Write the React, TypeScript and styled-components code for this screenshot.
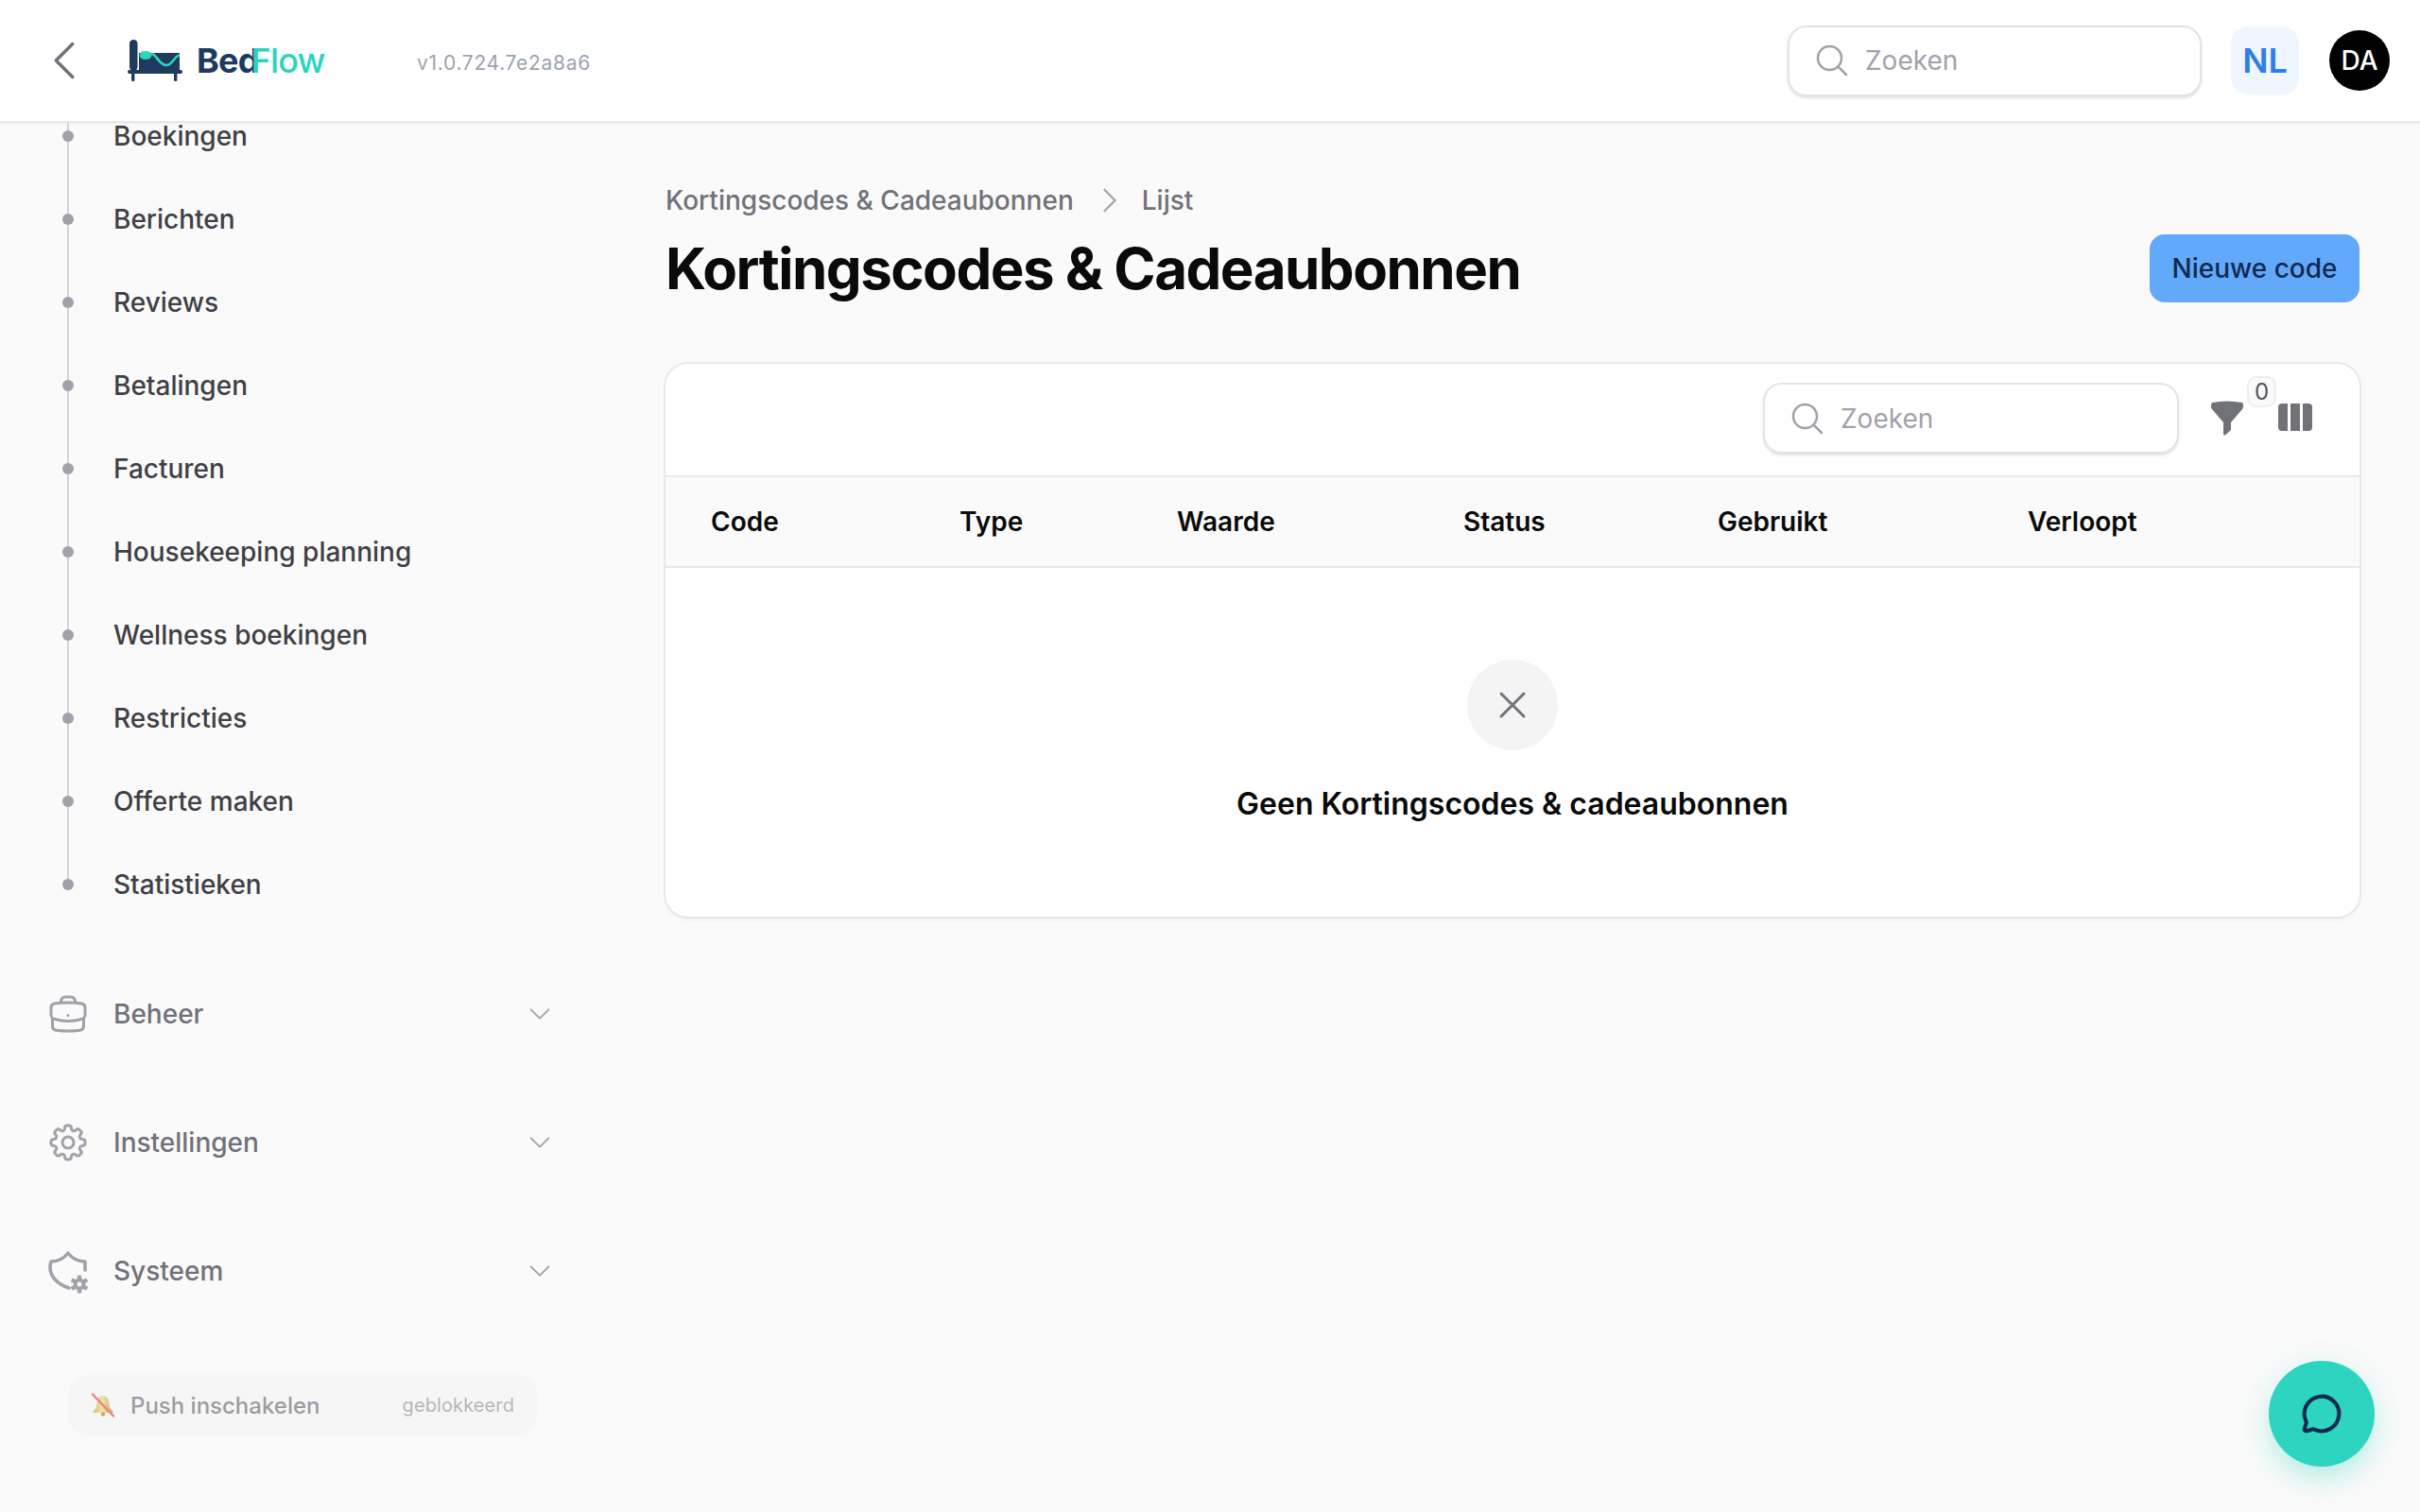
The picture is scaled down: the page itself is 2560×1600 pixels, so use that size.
import React from "react";
import styled, { createGlobalStyle } from "styled-components";
import {
  HiOutlineBriefcase,
  HiOutlineCog8Tooth,
  HiOutlineChevronDown,
  HiOutlineChevronLeft,
  HiOutlineChevronRight,
  HiOutlineMagnifyingGlass,
  HiOutlineXMark,
} from "react-icons/hi2";
import { MessageCircle } from "lucide-react";

const Global = createGlobalStyle`
  html, body { margin: 0; padding: 0; background: #fafafa; }
  * { box-sizing: border-box; }
  body { font-family: Inter, "Noto Sans", sans-serif; }
  #root { width: 2560px; height: 1600px; overflow: hidden; }
  svg { flex: none; }
`;

const Page = styled.div`
  width: 2560px;
  height: 1600px;
  display: flex;
  flex-direction: column;
  position: relative;
  background: #fafafa;
`;

const Header = styled.header`
  height: 130px;
  flex: none;
  display: flex;
  align-items: center;
  background: #fff;
  border-bottom: 2px solid #e7e7e8;
  box-shadow: 0 1px 3px rgba(0, 0, 0, 0.05);
  padding: 0 32px 0 50px;
  position: relative;
  z-index: 2;
`;

const BackButton = styled.div`
  width: 36px;
  height: 40px;
  display: flex;
  align-items: center;
  justify-content: center;
  color: #71717a;
  font-size: 56px;
`;

const Logo = styled.div`
  display: flex;
  align-items: center;
  margin-left: 49px;
  width: 306px;
`;

const WordMark = styled.div`
  display: flex;
  margin-left: 15px;
  font-size: 36px;
  line-height: 44px;
  letter-spacing: -0.8px;
`;

const Bed = styled.span`
  color: #1e3a5f;
  font-weight: 700;
`;

const Flow = styled.span`
  color: #2dd4bf;
  font-weight: 500;
  margin-left: -8px;
`;

const Version = styled.div`
  font-size: 21px;
  color: #9ca3af;
  letter-spacing: 0.7px;
  margin-top: 4px;
`;

const Spacer = styled.div`
  flex: 1;
`;

const SearchBox = styled.label`
  display: flex;
  align-items: center;
  gap: 13px;
  width: ${(p: { $w: number }) => p.$w}px;
  height: 75px;
  padding: 0 25px;
  background: #fff;
  border: 2px solid #e4e4e7;
  border-radius: 20px;
  box-shadow: 0 2px 3px rgba(0, 0, 0, 0.12);
  color: #a1a1aa;
  font-size: 40px;
  flex: none;
`;

const SearchInput = styled.input`
  border: 0;
  outline: 0;
  flex: 1;
  min-width: 0;
  background: transparent;
  font: 400 28px Inter, sans-serif;
  color: #18181b;
  &::placeholder {
    color: #a1a1aa;
    opacity: 1;
  }
`;

const LangBadge = styled.div`
  width: 72px;
  height: 72px;
  margin-left: 31px;
  border-radius: 18px;
  background: #eff6ff;
  color: #2f7fe6;
  font-size: 36px;
  font-weight: 600;
  display: flex;
  align-items: center;
  justify-content: center;
`;

const Avatar = styled.div`
  width: 64px;
  height: 64px;
  margin-left: 32px;
  border-radius: 50%;
  background: #000;
  color: #fff;
  font-size: 28px;
  font-weight: 500;
  display: flex;
  align-items: center;
  justify-content: center;
`;

const Body = styled.div`
  flex: 1;
  display: flex;
  min-height: 0;
`;

const Sidebar = styled.aside`
  width: 704px;
  flex: none;
  overflow: hidden;
`;

const NavList = styled.div`
  margin-top: -30px;
  display: flex;
  flex-direction: column;
`;

const NavItem = styled.div`
  position: relative;
  height: 88px;
  padding-left: 120px;
  display: flex;
  align-items: center;
  font-size: 28px;
  font-weight: 500;
  color: #3f3f46;

  &::before {
    content: "";
    position: absolute;
    left: 71px;
    top: 0;
    bottom: 0;
    width: 2px;
    background: #d4d4d8;
  }
  &:last-child::before {
    bottom: 50%;
  }
  &::after {
    content: "";
    position: absolute;
    left: 66px;
    top: 38px;
    width: 12px;
    height: 12px;
    border-radius: 50%;
    background: #a1a1aa;
  }
`;

const Groups = styled.div`
  margin: 25px 0 0 52px;
  width: 534px;
  display: flex;
  flex-direction: column;
`;

const GroupRow = styled.div`
  height: 136px;
  display: flex;
  align-items: center;
  color: #71717a;
  font-size: 28px;
  font-weight: 500;
`;

const GroupIcon = styled.div`
  width: 40px;
  height: 40px;
  margin-right: 28px;
  color: #a1a1aa;
  font-size: 48px;
  flex: none;
  display: flex;
  align-items: center;
  justify-content: center;
`;

const GroupLabel = styled.span`
  flex: 1;
`;

const GroupChevron = styled.div`
  color: #a1a1aa;
  font-size: 30px;
  display: flex;
`;

const PushPill = styled.div`
  margin: 42px 0 0 72px;
  width: 496px;
  height: 64px;
  border-radius: 20px;
  background: #f6f6f6;
  padding: 0 24px;
  display: flex;
  align-items: center;
`;

const PushLabel = styled.span`
  margin-left: 16px;
  flex: 1;
  font-size: 24px;
  font-weight: 500;
  color: #9c9ca2;
`;

const PushState = styled.span`
  font-size: 20px;
  letter-spacing: 0.1px;
  color: #b6b6ba;
`;

const Main = styled.main`
  flex: 1;
  padding: 64px 64px 0 0;
  display: flex;
  flex-direction: column;
`;

const Crumbs = styled.nav`
  display: flex;
  align-items: center;
  height: 36px;
  font-size: 28px;
  font-weight: 500;
  color: #71717a;
`;

const CrumbSep = styled.span`
  display: flex;
  margin: 0 16px 0 20px;
  color: #a1a1aa;
  font-size: 36px;
`;

const TitleRow = styled.div`
  display: flex;
  align-items: center;
  justify-content: space-between;
  margin-top: 18px;
  height: 72px;
`;

const Title = styled.h1`
  margin: 0;
  font-size: 60px;
  line-height: 72px;
  font-weight: 700;
  letter-spacing: -1.5px;
  color: #0a0a0a;
`;

const PrimaryButton = styled.button`
  height: 72px;
  width: 222px;
  border: 0;
  border-radius: 16px;
  background: #63a9fb;
  color: #0f2a4f;
  font: 500 28px Inter, sans-serif;
`;

const Card = styled.section`
  margin-top: 65px;
  background: #fff;
  box-shadow: 0 0 0 2px #e8e8ea, 0 3px 4px rgba(0, 0, 0, 0.06);
  border-radius: 24px;
  overflow: hidden;
  height: 585px;
`;

const Toolbar = styled.div`
  height: 118px;
  display: flex;
  align-items: center;
  justify-content: flex-end;
  padding: 0 50px 3px 0;
`;

const FilterWrap = styled.div`
  position: relative;
  margin-left: 34px;
  width: 34px;
  height: 37px;
  display: flex;
`;

const FilterBadge = styled.div`
  position: absolute;
  left: 38px;
  top: -26px;
  width: 31px;
  height: 33px;
  border-radius: 10px;
  border: 2px solid #eeeeef;
  background: #fafafa;
  color: #52525b;
  font-size: 24px;
  display: flex;
  align-items: center;
  justify-content: center;
`;

const ColumnsIcon = styled.div`
  margin: 0 0 2px 37px;
  display: flex;
`;

const TableHead = styled.div`
  height: 98px;
  padding-left: 48px;
  display: grid;
  grid-template-columns: 263px 230px 303px 269px 328px 1fr;
  align-items: center;
  background: #fafafa;
  border-top: 2px solid #e8e8ea;
  border-bottom: 2px solid #e8e8ea;
  font-size: 28px;
  font-weight: 600;
  color: #0a0a0a;
`;

const Empty = styled.div`
  display: flex;
  flex-direction: column;
  align-items: center;
  padding-top: 97px;
`;

const EmptyCircle = styled.div`
  width: 96px;
  height: 96px;
  border-radius: 50%;
  background: #f4f4f5;
  color: #71717a;
  font-size: 48px;
  display: flex;
  align-items: center;
  justify-content: center;
`;

const EmptyTitle = styled.div`
  margin-top: 37px;
  font-size: 32px;
  line-height: 40px;
  font-weight: 600;
  color: #0a0a0a;
`;

const Fab = styled.div`
  position: absolute;
  left: 2400px;
  top: 1440px;
  width: 112px;
  height: 112px;
  border-radius: 50%;
  background: #2dd4bf;
  color: #0f2a4f;
  display: flex;
  align-items: center;
  justify-content: center;
  box-shadow: 0 16px 32px -8px rgba(45, 212, 191, 0.35), 0 4px 40px rgba(45, 212, 191, 0.12);
`;

const BedLogo = () => (
  <svg width="58" height="44" viewBox="0 0 58 44">
    <rect x="2" y="0" width="8.5" height="33" rx="4.2" fill="#1e3a5f" />
    <rect x="0" y="32" width="58" height="4" rx="2" fill="#1e3a5f" />
    <rect x="4" y="35" width="3.4" height="9" rx="1.5" fill="#1e3a5f" />
    <rect x="49" y="35" width="3.4" height="9" rx="1.5" fill="#1e3a5f" />
    <path d="M12 14 H55 V32 H12 Z" fill="#1e3a5f" />
    <ellipse cx="19" cy="16.5" rx="6.5" ry="4.5" fill="#2dd4bf" />
    <path d="M25 15 C 30 14, 33 27, 41 27 C 48 27, 49 17, 55 16.5" fill="none" stroke="#2dd4bf" strokeWidth="2.6" />
  </svg>
);

const ShieldGear = () => (
  <svg width="48" height="48" viewBox="0 0 48 48" fill="none" stroke="#a1a1aa" strokeWidth="3.6" strokeLinecap="round" strokeLinejoin="round">
    <path d="M42 23 V14 Q 31 14 24 5 Q 17 14 6 14 Q 5 17 5 20 C 5 30 13 38 25 42" />
    <g transform="translate(36 38)" stroke="none" fill="#a1a1aa">
      {[0, 60, 120, 180, 240, 300].map((a) => (
        <rect key={a} x="-2.2" y="-9.6" width="4.4" height="6" rx="1" transform={`rotate(${a})`} />
      ))}
      <circle r="6.4" />
      <circle r="2.5" fill="#fafafa" />
    </g>
  </svg>
);

const Funnel = () => (
  <svg width="34" height="37" viewBox="0 0 34 37" fill="#71717a">
    <path d="M1 2 Q 17 -1 33 2 Q 34 3 34 5 V6 Q 34 8 33 9 L 21 23 V 31 L 15.5 36 Q 13 37.5 13 35 V 23 L 1 9 Q 0 8 0 6 V5 Q 0 3 1 2 Z" />
  </svg>
);

const Columns = () => (
  <svg width="36" height="29" viewBox="0 0 36 29" fill="#71717a">
    <path d="M4 0 H10 V29 H4 Q 0 29 0 25 V4 Q 0 0 4 0 Z" />
    <rect x="13" y="0" width="10" height="29" />
    <path d="M26 0 H32 Q 36 0 36 4 V25 Q 36 29 32 29 H26 Z" />
  </svg>
);

const BlockedBell = () => (
  <svg width="26" height="26" viewBox="0 0 26 26">
    <defs>
      <linearGradient id="bell" x1="0" y1="0" x2="1" y2="0">
        <stop offset="0" stopColor="#d6c07a" />
        <stop offset="0.45" stopColor="#efe2ac" />
        <stop offset="1" stopColor="#cdb36b" />
      </linearGradient>
    </defs>
    <path d="M13 3 C 8 3 7 7 6.5 12 C 6.2 16 4 18 2.5 19.5 C 2 20.5 3 21 4 21 H22 C 23 21 24 20.5 23.5 19.5 C 22 18 19.8 16 19.5 12 C 19 7 18 3 13 3 Z" fill="url(#bell)" />
    <circle cx="13" cy="22.5" r="2.2" fill="#c9ae66" />
    <path d="M2 1.5 L24 24.5" stroke="#f08080" strokeWidth="2.4" strokeLinecap="round" />
  </svg>
);

const navItems = [
  "Boekingen", "Berichten", "Reviews", "Betalingen", "Facturen",
  "Housekeeping planning", "Wellness boekingen", "Restricties", "Offerte maken", "Statistieken",
];
const groups: [string, React.ReactNode][] = [
  ["Beheer", <HiOutlineBriefcase />],
  ["Instellingen", <HiOutlineCog8Tooth />],
  ["Systeem", <ShieldGear />],
];
const columns = ["Code", "Type", "Waarde", "Status", "Gebruikt", "Verloopt"];

export default function App() {
  return (
    <Page>
      <Global />
      <Header>
        <BackButton><HiOutlineChevronLeft /></BackButton>
        <Logo>
          <BedLogo />
          <WordMark><Bed>Bed</Bed><Flow>Flow</Flow></WordMark>
        </Logo>
        <Version>v1.0.724.7e2a8a6</Version>
        <Spacer />
        <SearchBox $w={438}>
          <HiOutlineMagnifyingGlass />
          <SearchInput placeholder="Zoeken" />
        </SearchBox>
        <LangBadge>NL</LangBadge>
        <Avatar>DA</Avatar>
      </Header>
      <Body>
        <Sidebar>
          <NavList>
            {navItems.map((n) => <NavItem key={n}>{n}</NavItem>)}
          </NavList>
          <Groups>
            {groups.map(([label, icon]) => (
              <GroupRow key={label}>
                <GroupIcon>{icon}</GroupIcon>
                <GroupLabel>{label}</GroupLabel>
                <GroupChevron><HiOutlineChevronDown /></GroupChevron>
              </GroupRow>
            ))}
          </Groups>
          <PushPill>
            <BlockedBell />
            <PushLabel>Push inschakelen</PushLabel>
            <PushState>geblokkeerd</PushState>
          </PushPill>
        </Sidebar>
        <Main>
          <Crumbs>
            Kortingscodes &amp; Cadeaubonnen
            <CrumbSep><HiOutlineChevronRight /></CrumbSep>
            Lijst
          </Crumbs>
          <TitleRow>
            <Title>Kortingscodes &amp; Cadeaubonnen</Title>
            <PrimaryButton>Nieuwe code</PrimaryButton>
          </TitleRow>
          <Card>
            <Toolbar>
              <SearchBox $w={440}>
                <HiOutlineMagnifyingGlass />
                <SearchInput placeholder="Zoeken" />
              </SearchBox>
              <FilterWrap>
                <Funnel />
                <FilterBadge>0</FilterBadge>
              </FilterWrap>
              <ColumnsIcon><Columns /></ColumnsIcon>
            </Toolbar>
            <TableHead>
              {columns.map((c) => <div key={c}>{c}</div>)}
            </TableHead>
            <Empty>
              <EmptyCircle><HiOutlineXMark /></EmptyCircle>
              <EmptyTitle>Geen Kortingscodes &amp; cadeaubonnen</EmptyTitle>
            </Empty>
          </Card>
        </Main>
      </Body>
      <Fab><MessageCircle size={44} strokeWidth={2.2} /></Fab>
    </Page>
  );
}
